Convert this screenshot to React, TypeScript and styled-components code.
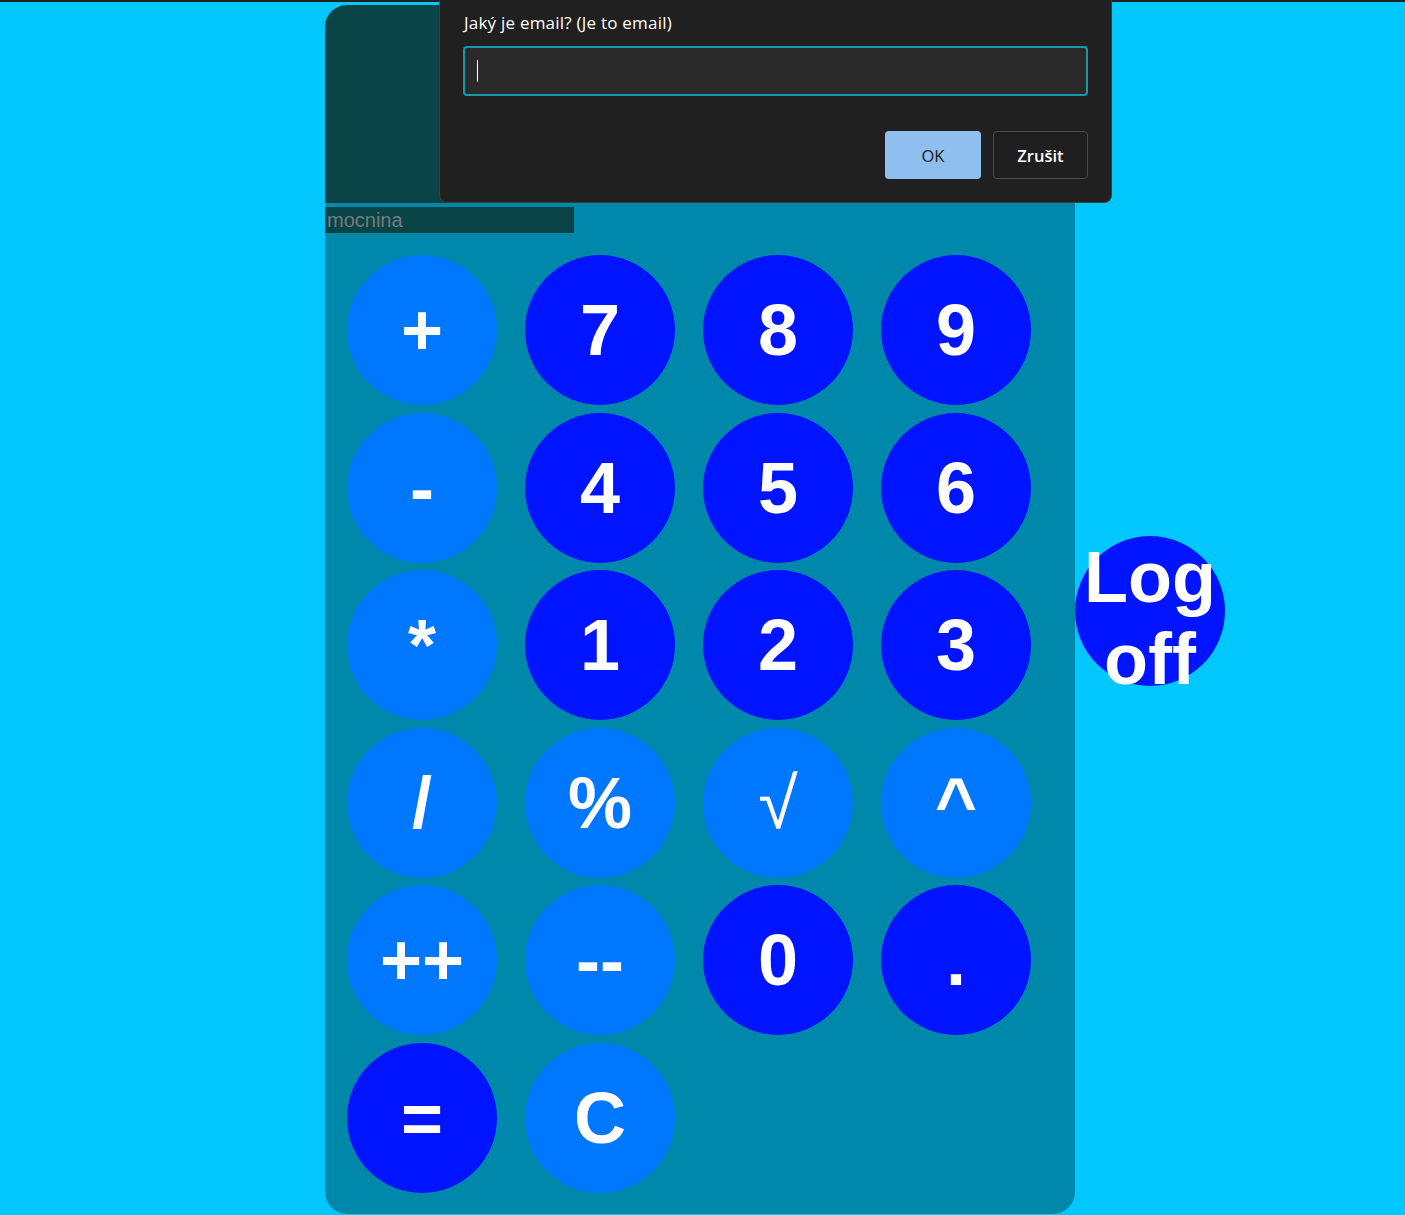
import React from "react";
import styled, { createGlobalStyle } from "styled-components";

const GlobalStyle = createGlobalStyle`
  html, body {
    margin: 0;
    padding: 0;
    background: #00c8ff;
    font-family: "Liberation Sans", Arial, sans-serif;
    overflow: hidden;
  }
`;

const Page = styled.div`
  display: flex;
  flex-direction: row;
  align-items: center;
  padding: 5px 0 0 325px;
`;

const Calculator = styled.div`
  width: 750px;
  background: #0088aa;
  border-radius: 22px;
  overflow: hidden;
  display: flex;
  flex-direction: column;
`;

const Display = styled.div`
  height: 198px;
  background: #0a4447;
`;

const PowerInput = styled.input`
  margin-top: 4px;
  width: 249px;
  height: 26px;
  box-sizing: border-box;
  border: none;
  outline: none;
  padding: 0 2px;
  background: #0a4447;
  color: #ffffff;
  font-family: "Liberation Sans", Arial, sans-serif;
  font-size: 20px;
  &::placeholder {
    color: #737b7b;
  }
`;

const Keypad = styled.div`
  display: grid;
  grid-template-columns: repeat(4, 150px);
  column-gap: 28px;
  row-gap: 7.6px;
  padding: 22px 0 21px 22px;
`;

const Key = styled.button<{ $dark?: boolean; $thin?: boolean }>`
  width: 150px;
  height: 150px;
  border-radius: 50%;
  border: none;
  padding: 0;
  margin: 0;
  background: ${(p) => (p.$dark ? "#0014ff" : "#0077ff")};
  color: #ffffff;
  font-family: "Liberation Sans", Arial, sans-serif;
  font-size: 72px;
  font-weight: ${(p) => (p.$thin ? 400 : 700)};
  display: flex;
  align-items: center;
  justify-content: center;
  cursor: pointer;
`;

const LogOff = styled.button`
  width: 150px;
  height: 150px;
  margin-top: 3px;
  border-radius: 50%;
  border: none;
  padding: 0;
  background: #0014ff;
  color: #ffffff;
  font-family: "Liberation Sans", Arial, sans-serif;
  font-size: 72px;
  font-weight: 700;
  line-height: normal;
  display: flex;
  flex-direction: column;
  align-items: center;
  justify-content: flex-start;
  overflow: visible;
  white-space: normal;
  flex-shrink: 0;
`;

const TopEdge = styled.div`
  position: fixed;
  top: 0;
  left: 0;
  right: 0;
  height: 2px;
  background: #202020;
  z-index: 10;
`;

const Dialog = styled.div`
  position: fixed;
  top: 0;
  left: 439px;
  width: 673px;
  height: 203px;
  box-sizing: border-box;
  background: #202020;
  border: 1px solid #3c3c3c;
  border-top: none;
  border-radius: 0 0 8px 8px;
  padding: 12px 23px 0 24px;
  display: flex;
  flex-direction: column;
  z-index: 11;
  font-family: "Open Sans", "Noto Sans", sans-serif;
`;

const DialogLabel = styled.div`
  color: #ffffff;
  font-size: 17px;
  line-height: 22px;
  height: 22px;
  letter-spacing: 0.22px;
`;

const DialogInput = styled.div`
  margin: 12px 0 0 -1px;
  height: 50px;
  box-sizing: border-box;
  border: 2px solid #1898aa;
  border-radius: 4px;
  background: #2a2a2a;
  display: flex;
  align-items: center;
  padding-left: 12px;
`;

const Caret = styled.span`
  display: block;
  width: 1px;
  height: 22px;
  background: #ffffff;
`;

const DialogButtons = styled.div`
  margin-top: 35px;
  display: flex;
  justify-content: flex-end;
  gap: 12px;
`;

const DialogButton = styled.button<{ $primary?: boolean }>`
  width: ${(p) => (p.$primary ? "96px" : "95px")};
  height: 48px;
  box-sizing: border-box;
  border-radius: 4px;
  border: ${(p) => (p.$primary ? "none" : "1px solid #4a4a4a")};
  background: ${(p) => (p.$primary ? "#8fbfef" : "#1f1f1f")};
  color: ${(p) => (p.$primary ? "#1a1a1a" : "#ffffff")};
  font-family: "Open Sans", "Noto Sans", sans-serif;
  font-size: 16.5px;
  font-weight: ${(p) => (p.$primary ? 400 : 600)};
  padding: 0;
`;

type KeyDef = { label: string; dark?: boolean; thin?: boolean };

const keys: KeyDef[] = [
  { label: "+" },
  { label: "7", dark: true },
  { label: "8", dark: true },
  { label: "9", dark: true },
  { label: "-" },
  { label: "4", dark: true },
  { label: "5", dark: true },
  { label: "6", dark: true },
  { label: "*" },
  { label: "1", dark: true },
  { label: "2", dark: true },
  { label: "3", dark: true },
  { label: "/" },
  { label: "%" },
  { label: "√", thin: true },
  { label: "^" },
  { label: "++" },
  { label: "--" },
  { label: "0", dark: true },
  { label: ".", dark: true },
  { label: "=", dark: true },
  { label: "C" },
];

export default function App() {
  return (
    <>
      <GlobalStyle />
      <Page>
        <Calculator>
          <Display />
          <PowerInput placeholder="mocnina" />
          <Keypad>
            {keys.map((k) => (
              <Key key={k.label} $dark={k.dark} $thin={k.thin}>
                {k.label}
              </Key>
            ))}
          </Keypad>
        </Calculator>
        <LogOff>
          <span>Log</span>
          <span>off</span>
        </LogOff>
      </Page>
      <TopEdge />
      <Dialog>
        <DialogLabel>Jaký je email? (Je to email)</DialogLabel>
        <DialogInput>
          <Caret />
        </DialogInput>
        <DialogButtons>
          <DialogButton $primary>OK</DialogButton>
          <DialogButton>Zrušit</DialogButton>
        </DialogButtons>
      </Dialog>
    </>
  );
}
